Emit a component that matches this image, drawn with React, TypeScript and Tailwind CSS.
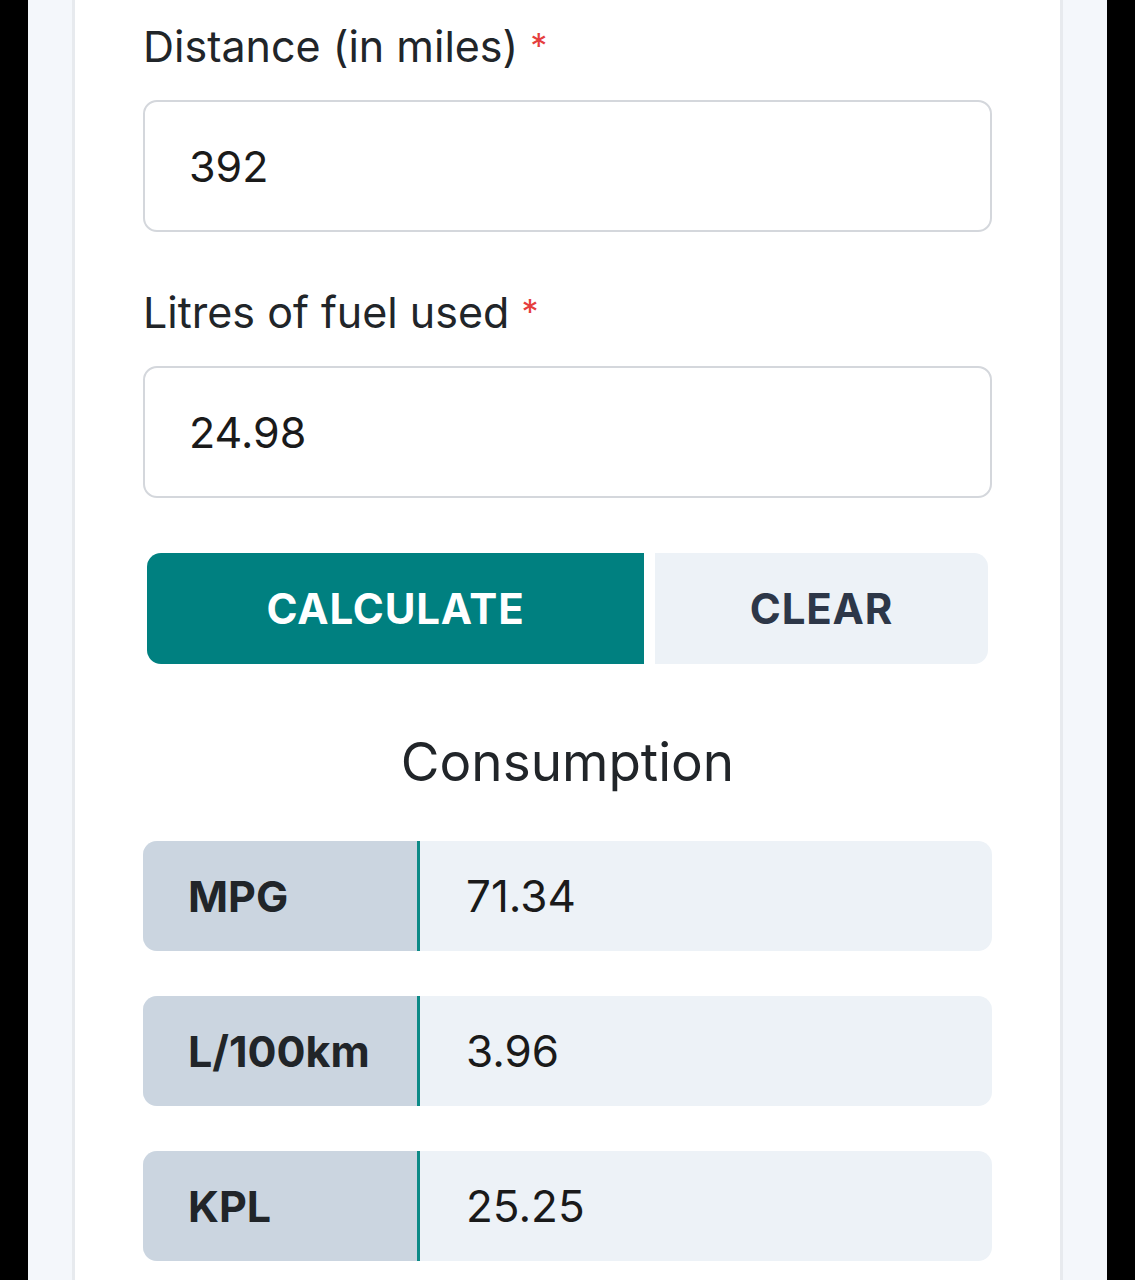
const results = [
  { label: "MPG", value: "71.34" },
  { label: "L/100km", value: "3.96" },
  { label: "KPL", value: "25.25" },
];

function Field({ label, value }: { label: string; value: string }) {
  return (
    <div className="flex flex-col">
      <label className="text-[43px] leading-[52px] text-[#212529]">
        {label} <span className="text-[#e53e3e] text-[34px] align-top">*</span>
      </label>
      <div className="mt-[28px] h-[132px] rounded-[14px] border-2 border-[#d4d7dc] flex items-center px-[44px] text-[43px] text-[#1a1a1a]">
        {value}
      </div>
    </div>
  );
}

export default function App() {
  return (
    <div
      className="h-[1280px] overflow-hidden bg-black px-[28px]"
      style={{ fontFamily: "Inter, 'Noto Sans', sans-serif" }}
    >
      <div className="h-full bg-[#f4f7fb] px-[44px]">
        <div className="h-full bg-white border-x-[3px] border-[#e7eaee] px-[68px] pt-[20px]">
          <Field label="Distance (in miles)" value="392" />
          <div className="mt-[54px]">
            <Field label="Litres of fuel used" value="24.98" />
          </div>

          <div className="mt-[55px] mx-[4px] flex gap-[11px] h-[111px]">
            <button className="w-[497px] rounded-l-[14px] bg-[#008080] text-white font-bold text-[42px] tracking-[0.02em]">
              CALCULATE
            </button>
            <button className="flex-1 rounded-r-[14px] bg-[#edf2f7] text-[#2d3748] font-bold text-[42px] tracking-[0.02em]">
              CLEAR
            </button>
          </div>

          <h2 className="mt-[66px] text-center text-[53px] leading-[64px] text-[#212529]">
            Consumption
          </h2>

          <div className="mt-[47px] flex flex-col gap-[45px]">
            {results.map((r) => (
              <div key={r.label} className="flex h-[110px] rounded-[14px] bg-[#edf2f7] overflow-hidden">
                <div className="w-[277px] bg-[#cbd5e0] border-r-[3px] border-[#0d8a87] flex items-center pl-[45px] font-bold text-[43px] text-[#212529]">
                  {r.label}
                </div>
                <div className="flex items-center pl-[46px] text-[44px] text-[#1a1a1a]">
                  {r.value}
                </div>
              </div>
            ))}
          </div>
        </div>
      </div>
    </div>
  );
}
